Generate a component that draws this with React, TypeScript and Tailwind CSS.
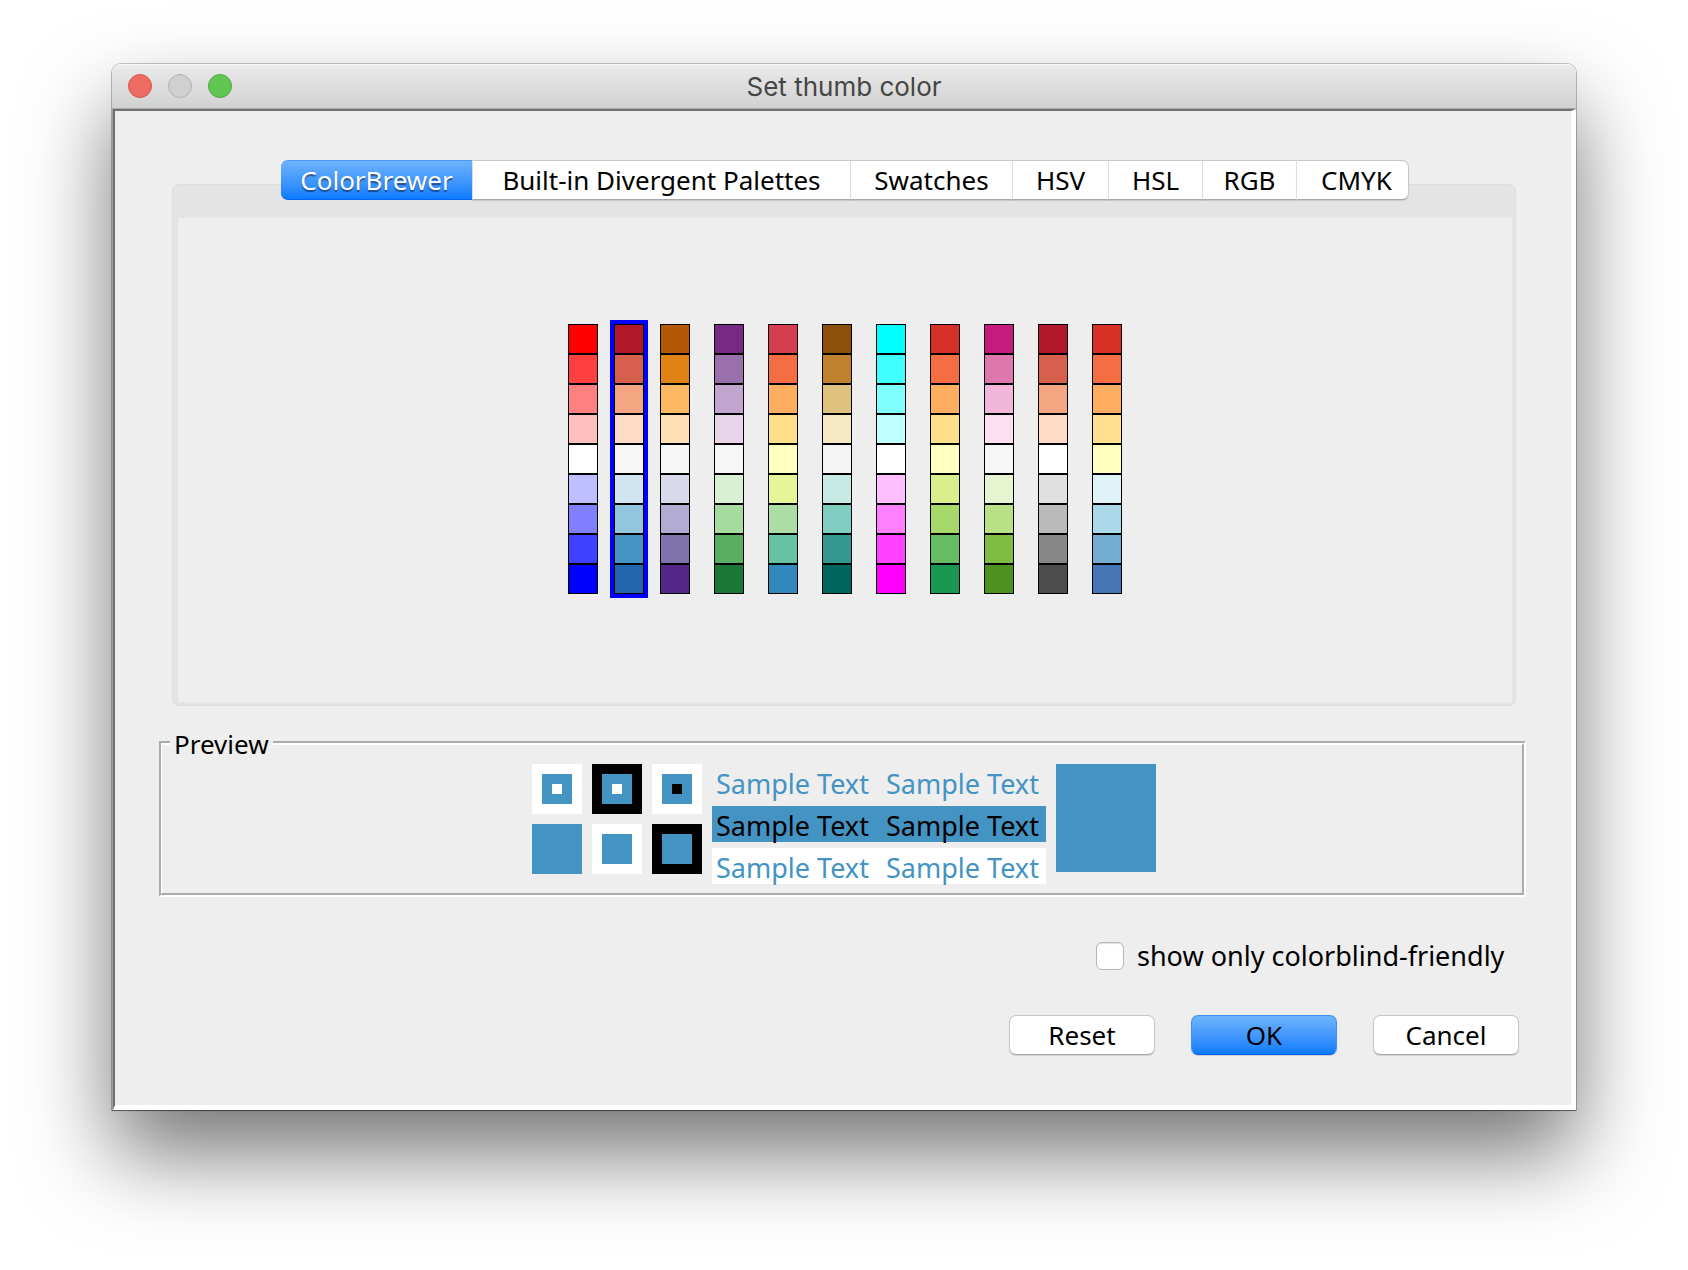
import { useState } from "react";

const palettes = [
  { name: "Blue to red", colors: ["#ff0000", "#ff4040", "#ff8080", "#ffbfbf", "#ffffff", "#bfbfff", "#8080ff", "#4040ff", "#0000ff"] },
  { name: "RdBu", colors: ["#b2182b", "#d6604d", "#f4a582", "#fddbc7", "#f7f7f7", "#d1e5f0", "#92c5de", "#4393c3", "#2166ac"] },
  { name: "PuOr", colors: ["#b35806", "#e08214", "#fdb863", "#fee0b6", "#f7f7f7", "#d8daeb", "#b2abd2", "#8073ac", "#542788"] },
  { name: "PRGn", colors: ["#762a83", "#9970ab", "#c2a5cf", "#e7d4e8", "#f7f7f7", "#d9f0d3", "#a6dba0", "#5aae61", "#1b7837"] },
  { name: "Spectral", colors: ["#d53e4f", "#f46d43", "#fdae61", "#fee08b", "#ffffbf", "#e6f598", "#abdda4", "#66c2a5", "#3288bd"] },
  { name: "BrBG", colors: ["#8c510a", "#bf812d", "#dfc27d", "#f6e8c3", "#f5f5f5", "#c7eae5", "#80cdc1", "#35978f", "#01665e"] },
  { name: "Magenta to cyan", colors: ["#00ffff", "#40ffff", "#80ffff", "#bfffff", "#ffffff", "#ffbfff", "#ff80ff", "#ff40ff", "#ff00ff"] },
  { name: "RdYlGn", colors: ["#d73027", "#f46d43", "#fdae61", "#fee08b", "#ffffbf", "#d9ef8b", "#a6d96a", "#66bd63", "#1a9850"] },
  { name: "PiYG", colors: ["#c51b7d", "#de77ae", "#f1b6da", "#fde0ef", "#f7f7f7", "#e6f5d0", "#b8e186", "#7fbc41", "#4d9221"] },
  { name: "RdGy", colors: ["#b2182b", "#d6604d", "#f4a582", "#fddbc7", "#ffffff", "#e0e0e0", "#bababa", "#878787", "#4d4d4d"] },
  { name: "RdYlBu", colors: ["#d73027", "#f46d43", "#fdae61", "#fee090", "#ffffbf", "#e0f3f8", "#abd9e9", "#74add1", "#4575b4"] },
];

const tabs = [
  { label: "ColorBrewer", width: "w-[191px]" },
  { label: "Built-in Divergent Palettes", width: "w-[378px]" },
  { label: "Swatches", width: "w-[162px]" },
  { label: "HSV", width: "w-[96px]" },
  { label: "HSL", width: "w-[94px]" },
  { label: "RGB", width: "w-[94px]" },
  { label: "CMYK", width: "w-[113px]" },
];

// Each chip is drawn from the outside in: frame, ring, centre.
const chips = [
  { frame: "bg-white", ring: "bg-[#4393c3]", core: "bg-white" },
  { frame: "bg-black", ring: "bg-[#4393c3]", core: "bg-white" },
  { frame: "bg-white", ring: "bg-[#4393c3]", core: "bg-black" },
  { frame: "bg-[#4393c3]", ring: "bg-[#4393c3]", core: "bg-[#4393c3]" },
  { frame: "bg-white", ring: "bg-[#4393c3]", core: "bg-[#4393c3]" },
  { frame: "bg-black", ring: "bg-[#4393c3]", core: "bg-[#4393c3]" },
];

const samples = [
  "text-[#4393c3]",
  "bg-[#4393c3] text-black",
  "bg-white text-[#4393c3]",
];

function TitleBar() {
  return (
    <header className="grid h-[45px] grid-cols-[1fr_auto_1fr] items-center rounded-t-[9px] border-b border-[#a8a8a8] bg-linear-to-b from-[#ebebeb] to-[#d1d1d1] px-4 shadow-[inset_0_1px_0_#f7f7f7]">
      <div className="flex gap-4">
        <button aria-label="Close" className="size-6 rounded-full border border-[#d8544a] bg-[#ed6b60]" />
        <button aria-label="Minimize" className="size-6 rounded-full border border-[#b0b0b0] bg-[#d0d0d0]" />
        <button aria-label="Zoom" className="size-6 rounded-full border border-[#4fa73f] bg-[#62c655]" />
      </div>
      <h1 className="pt-0.5 font-['Inter',sans-serif] text-[26px] leading-8 text-[#464646]">Set thumb color</h1>
    </header>
  );
}

function TabBar({ active, onSelect }: { active: string; onSelect: (label: string) => void }) {
  return (
    <div role="tablist" className="relative z-10 -mb-4 flex justify-center pl-0.5">
      {tabs.map((tab) => (
        <button
          key={tab.label}
          role="tab"
          aria-selected={tab.label === active}
          onClick={() => onSelect(tab.label)}
          className={
            tab.width +
            " h-10 border-y whitespace-nowrap first:rounded-l-[7px] last:rounded-r-[7px] last:border-r last:pl-2 " +
            (tab.label === active
              ? "border-t-[#4a9bf5] border-b-[#0a62f5] bg-linear-to-b from-[#6cb3fa] to-[#067bff] text-white [text-shadow:0_2px_1px_rgba(0,0,0,0.45)]"
              : "border-l border-t-[#c8c8c8] border-r-[#c8c8c8] border-b-[#a6a6a6] border-l-[#dedede] bg-white text-black shadow-[0_1px_1px_rgba(0,0,0,0.12)]")
          }
        >
          {tab.label}
        </button>
      ))}
    </div>
  );
}

function PaletteGrid({ selected, onSelect }: { selected: string; onSelect: (name: string) => void }) {
  return (
    <div className="flex items-center justify-center">
      {palettes.map((palette) => (
        <button
          key={palette.name}
          aria-label={palette.name}
          aria-pressed={palette.name === selected}
          onClick={() => onSelect(palette.name)}
          className={palette.name === selected ? "bg-[#0000ff] p-1" : "px-3 py-1"}
        >
          {palette.colors.map((color, i) => (
            <span key={i} className="block size-[30px] border border-black" style={{ backgroundColor: color }} />
          ))}
        </button>
      ))}
    </div>
  );
}

function Preview() {
  return (
    <fieldset className="mt-[22px] border-4 border-l-3 border-white pb-[9px] [border-style:groove]">
      <legend className="ml-2 px-1 pt-0.5 leading-7">Preview</legend>
      <div className="flex items-start justify-center gap-2.5 pt-1.5 pl-1">
        <div className="grid grid-cols-3 gap-2.5">
          {chips.map((chip, i) => (
            <div key={i} className={"size-[50px] p-2.5 " + chip.frame}>
              <div className={"size-[30px] p-2.5 " + chip.ring}>
                <div className={"size-2.5 " + chip.core} />
              </div>
            </div>
          ))}
        </div>
        <div className="flex flex-col gap-1.5">
          {samples.map((sample) => (
            <div key={sample} className={"grid h-9 w-[334px] grid-cols-[170px_auto] px-1 text-[27px] leading-[40px] whitespace-nowrap " + sample}>
              <span>Sample Text</span>
              <span>Sample Text</span>
            </div>
          ))}
        </div>
        <div className="h-[108px] w-[100px] bg-[#4393c3]" />
      </div>
    </fieldset>
  );
}

export default function App() {
  const [tab, setTab] = useState("ColorBrewer");
  const [palette, setPalette] = useState("RdBu");
  const [friendly, setFriendly] = useState(false);
  const plainButton =
    "h-10 w-[146px] rounded-[7px] border border-[#c6c6c6] border-b-[#a8a8a8] bg-white pb-0.5 shadow-[0_1px_1px_rgba(0,0,0,0.12)]";

  return (
    <div className="min-h-screen overflow-hidden bg-white px-28 pt-16 pb-40 font-['Noto_Sans',sans-serif] text-[26px] text-black">
      <main className="rounded-t-[9px] shadow-[0_0_0_1px_rgba(0,0,0,0.22),0_1px_1px_rgba(0,0,0,0.4),0_44px_86px_rgba(0,0,0,0.54)]">
        <TitleBar />
        <div className="border-l border-[#a0a0a0]">
          <div className="border-t-2 border-r-5 border-b-5 border-l-2 border-t-[#707070] border-r-white border-b-white border-l-[#707070] bg-[#eeeeee] pt-[49px] pr-[45px] pb-[50px] pl-11">
            <div className="mr-2.5 ml-[13px]">
              <TabBar active={tab} onSelect={setTab} />
              <div role="tabpanel" className="rounded-[7px] border border-[#dddddd] bg-[#e4e4e4] pt-[33px] pr-[3px] pb-[3px] pl-[5px]">
                <div className="bg-[#eeeeee] pt-[102px] pb-[104px]">
                  <PaletteGrid selected={palette} onSelect={setPalette} />
                </div>
              </div>
            </div>
            <Preview />
            <div className="mt-[45px] mr-1.5 flex justify-end">
              <label className="flex w-[424px] items-center gap-[13px] text-[27px] leading-7 whitespace-nowrap">
                <input
                  type="checkbox"
                  checked={friendly}
                  onChange={(e) => setFriendly(e.target.checked)}
                  className="size-7 appearance-none rounded-md border border-[#b8b8b8] bg-white shadow-[inset_0_1px_1px_rgba(0,0,0,0.12)] checked:bg-[#067bff]"
                />
                show only colorblind-friendly
              </label>
            </div>
            <div className="mt-[45px] mr-[7px] flex justify-end gap-9">
              <button className={plainButton}>Reset</button>
              <button className="h-10 w-[146px] rounded-[7px] border border-[#3f93f3] border-b-[#0a62f5] bg-linear-to-b from-[#6cb3fa] to-[#067bff] pb-0.5 shadow-[0_1px_1px_rgba(0,0,0,0.15)]">
                OK
              </button>
              <button className={plainButton}>Cancel</button>
            </div>
          </div>
        </div>
      </main>
    </div>
  );
}
